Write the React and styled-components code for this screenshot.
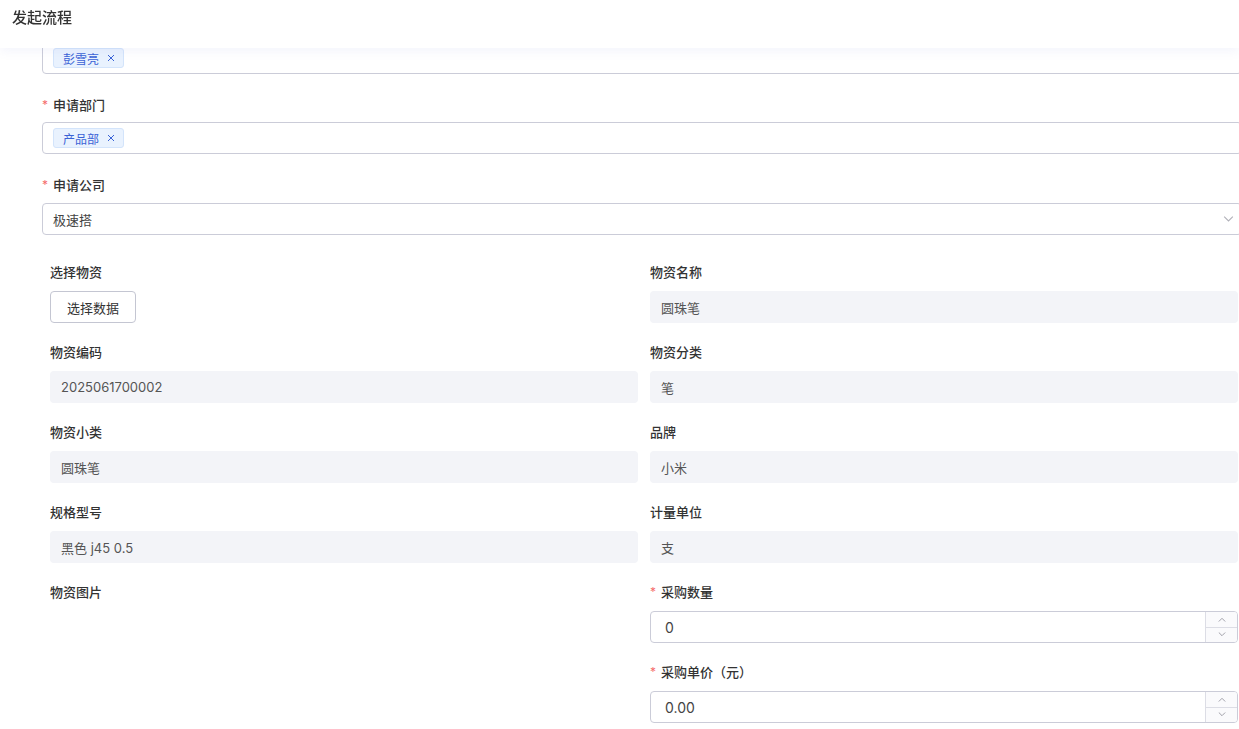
import React from "react";
import styled, { createGlobalStyle } from "styled-components";

const Global = createGlobalStyle`
  html, body { margin: 0; padding: 0; background: #fff; overflow: hidden; }
  body { font-family: "Inter", "Noto Sans CJK SC", "Noto Sans", sans-serif; color: #333; }
  * { box-sizing: border-box; }
`;

const Header = styled.header`
  position: fixed;
  top: 0;
  left: 0;
  right: 0;
  height: 48px;
  background: #fff;
  z-index: 10;
  display: flex;
  align-items: flex-start;
  padding: 8px 12px 0;
  box-shadow: 0 3px 10px rgba(120, 130, 220, 0.09);
`;

const Title = styled.h1`
  margin: 0;
  font-size: 15px;
  line-height: 20px;
  font-weight: 500;
  color: #333;
`;

const Main = styled.main`
  padding: 42px 0 0 42px;
  margin-right: -3px;
`;

const Field = styled.div`
  display: flex;
  flex-direction: column;
  margin-bottom: ${(p) => (p.$grid ? "18px" : "20px")};
`;

const Label = styled.label`
  display: flex;
  align-items: center;
  height: 20px;
  margin-bottom: ${(p) => (p.$grid ? "10px" : "8px")};
  font-size: 13px;
  font-weight: 500;
  color: #333;
`;

const Star = styled.span`
  color: #f56c6c;
  font-weight: 400;
  width: 11px;
  font-size: 12px;
`;

const Box = styled.div`
  height: 32px;
  border: 1px solid #cbccd8;
  border-radius: 4px;
  background: #fff;
  display: flex;
  align-items: center;
  padding: 0 10px;
  font-size: 13px;
  color: #444;
  gap: 6px;
`;

const SelectBox = styled(Box)`
  justify-content: space-between;
  padding-right: 7px;
  margin-top: 1px;
`;

const Tag = styled.span`
  display: inline-flex;
  align-items: center;
  height: 20px;
  padding: 0 8px 0 9px;
  gap: 8px;
  background: #e9f2fe;
  border: 1px solid #d3e4fb;
  border-radius: 3px;
  font-size: 12px;
  color: #3b63d6;
`;

const Grid = styled.div`
  display: grid;
  grid-template-columns: 588px 588px;
  column-gap: 12px;
  padding: 6px 0 0 8px;
`;

const ReadOnly = styled.div`
  height: 32px;
  border-radius: 4px;
  background: #f3f4f8;
  display: flex;
  align-items: center;
  padding: 0 11px;
  font-size: 13px;
  color: #555;
`;

const Button = styled.button`
  height: 32px;
  width: 86px;
  border: 1px solid #c4c6d2;
  border-radius: 4px;
  background: #fff;
  font-family: inherit;
  font-size: 13px;
  color: #333;
  padding: 0;
  cursor: pointer;
`;

const NumberBox = styled.div`
  height: 32px;
  border: 1px solid #cbccd8;
  border-radius: 4px;
  display: flex;
  overflow: hidden;
`;

const NumberValue = styled.div`
  flex: 1;
  display: flex;
  align-items: center;
  padding: 0 14px;
  font-size: 14px;
  color: #444;
`;

const Spinner = styled.div`
  width: 32px;
  border-left: 1px solid #dcdde5;
  display: flex;
  flex-direction: column;
  background: #fafafc;
`;

const SpinBtn = styled.div`
  flex: 1;
  display: flex;
  align-items: center;
  justify-content: center;
  border-top: ${(p) => (p.$bottom ? "1px solid #dcdde5" : "none")};
`;

const Chevron = ({ up, size = 8, color = "#999" }) => (
  <svg width={size} height={size / 2 + 1} viewBox="0 0 10 6" fill="none">
    <path
      d={up ? "M1 5.5 L5 1.5 L9 5.5" : "M1 0.5 L5 4.5 L9 0.5"}
      stroke={color}
      strokeWidth="1"
    />
  </svg>
);

const Close = () => (
  <svg width="8" height="8" viewBox="0 0 8 8">
    <path d="M1 1 L7 7 M7 1 L1 7" stroke="#3b63d6" strokeWidth="1" />
  </svg>
);

const items = [
  { label: "选择物资", type: "button" },
  { label: "物资名称", value: "圆珠笔" },
  { label: "物资编码", value: "2025061700002" },
  { label: "物资分类", value: "笔" },
  { label: "物资小类", value: "圆珠笔" },
  { label: "品牌", value: "小米" },
  { label: "规格型号", value: "黑色 j45 0.5" },
  { label: "计量单位", value: "支" },
  { label: "物资图片", type: "empty" },
  { label: "采购数量", type: "number", value: "0", required: true },
  { type: "blank" },
  { label: "采购单价（元）", type: "number", value: "0.00", required: true },
];

function GridItem({ item }) {
  if (item.type === "blank") return <div />;
  return (
    <Field $grid>
      <Label $grid>
        {item.required && <Star>*</Star>}
        {item.label}
      </Label>
      {item.type === "button" && <Button>选择数据</Button>}
      {item.type === "number" && (
        <NumberBox>
          <NumberValue>{item.value}</NumberValue>
          <Spinner>
            <SpinBtn>
              <Chevron up size={8} color="#8a8a95" />
            </SpinBtn>
            <SpinBtn $bottom>
              <Chevron size={8} color="#8a8a95" />
            </SpinBtn>
          </Spinner>
        </NumberBox>
      )}
      {!item.type && <ReadOnly>{item.value}</ReadOnly>}
    </Field>
  );
}

export default function App() {
  return (
    <>
      <Global />
      <Header>
        <Title>发起流程</Title>
      </Header>
      <Main>
        <Field>
          <Box>
            <Tag>
              彭雪亮
              <Close />
            </Tag>
          </Box>
        </Field>
        <Field>
          <Label>
            <Star>*</Star>申请部门
          </Label>
          <Box>
            <Tag>
              产品部
              <Close />
            </Tag>
          </Box>
        </Field>
        <Field>
          <Label>
            <Star>*</Star>申请公司
          </Label>
          <SelectBox>
            <span>极速搭</span>
            <Chevron size={11} color="#b0b0b8" />
          </SelectBox>
        </Field>
        <Grid>
          {items.map((it, i) => (
            <GridItem key={i} item={it} />
          ))}
        </Grid>
      </Main>
    </>
  );
}
